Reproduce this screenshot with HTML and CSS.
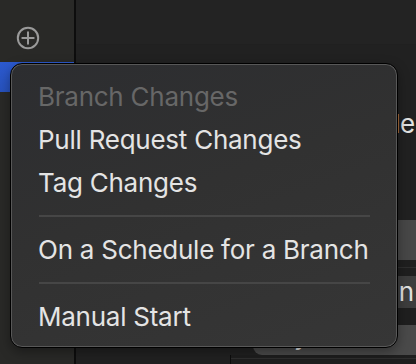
FILE: index.html
```html
<!DOCTYPE html>
<html>
<head>
<meta charset="utf-8">
<link rel="stylesheet" href="styles.css">
</head>
<body>
<div class="app">
  <aside class="sidebar">
    <div class="side-top">
      <svg class="plus" width="24" height="24" viewBox="0 0 24 24">
        <circle cx="12" cy="12" r="10.2" fill="none" stroke="#9a9a9a" stroke-width="2"/>
        <path d="M12 6.3V17.7M6.3 12H17.7" stroke="#9a9a9a" stroke-width="2" stroke-linecap="round"/>
      </svg>
    </div>
    <div class="side-row selected"></div>
  </aside>
  <main class="main">
    <div class="toolbar"></div>
    <div class="form">
      <div class="label-row"><span class="label">Schedule</span></div>
      <div class="btn btn-a"></div>
      <div class="band"></div>
      <div class="btn btn-b"><span class="btn-text">Action</span></div>
      <div class="band2"></div>
      <div class="btn btn-c"><span class="btn-text2">Key</span></div>
      <div class="footer"></div>
    </div>
  </main>
</div>

<div class="menu">
  <div class="item disabled">Branch Changes</div>
  <div class="item">Pull Request Changes</div>
  <div class="item">Tag Changes</div>
  <div class="sep"></div>
  <div class="item">On a Schedule for a Branch</div>
  <div class="sep"></div>
  <div class="item">Manual Start</div>
</div>
</body>
</html>
```

FILE: styles.css
```css
html, body {
  margin: 0;
  padding: 0;
  width: 416px;
  height: 364px;
  overflow: hidden;
  background: #222222;
  font-family: Inter, "Noto Sans", sans-serif;
}

.app {
  display: flex;
  width: 416px;
  height: 364px;
}

.sidebar {
  width: 74px;
  flex: none;
  background: #292927;
  border-right: 2px solid #0d0d0d;
  display: flex;
  flex-direction: column;
}

.side-top {
  height: 62px;
  display: flex;
  justify-content: flex-start;
  padding-left: 16px;
  padding-top: 26px;
  box-sizing: border-box;
}

.side-row.selected {
  height: 30px;
  background: linear-gradient(180deg, #2c5ad0, #2752bd);
}

.main {
  flex: 1;
  display: flex;
  flex-direction: column;
  background: #212121;
}

.toolbar {
  height: 44px;
  flex: none;
  background: #232323;
  box-shadow: inset 40px -1px 0 #232323, inset 0 -1px 0 #3b3b3b;
  border-bottom: 1px solid #202020;
}

.form {
  flex: 1;
  display: flex;
  flex-direction: column;
  padding-top: 63px;
  padding-left: 155px;
}

.label-row {
  height: 32px;
  display: flex;
  justify-content: flex-end;
  padding-right: 1px;
}

.label {
  font-size: 26px;
  line-height: 32px;
  color: #e2e2e2;
  white-space: nowrap;
  letter-spacing: -0.25px;
}

.btn {
  display: flex;
  justify-content: flex-end;
  align-items: center;
}

.btn-a {
  margin-top: 80px;
  height: 40px;
  background: #474747;
}

.band {
  height: 16px;
  background: #1f1f1f;
  box-shadow: inset 0 -8px 0 #1f1f1f, inset 0 -9px 0 #2e2e2e;
}

.btn-b {
  height: 32px;
  background: #3d3d3d;
}

.btn-text {
  font-size: 26px;
  line-height: 32px;
  color: #e0e0e0;
  padding-right: 2px;
  white-space: nowrap;
}

.band2 {
  height: 17px;
  background: #1f1f1f;
}

.btn-c {
  height: 30px;
  margin-left: 22px;
  background: #4a4a4a;
  border-radius: 0 0 0 9px;
  justify-content: flex-start;
  align-items: flex-start;
}

.btn-text2 {
  font-size: 26px;
  line-height: 26px;
  color: #e0e0e0;
  padding-left: 10px;
  margin-top: -2px;
}

.footer {
  flex: 1;
  background: #1e1e1e;
  border-left: 1px solid #0c0c0c;
  margin-left: -1px;
  box-shadow: inset 0 -5px 0 #1e1e1e, inset 0 -6px 0 #2e2e2e;
}

.menu {
  position: absolute;
  left: 10px;
  top: 63px;
  width: 388px;
  height: 285px;
  box-sizing: border-box;
  border: 1px solid #000;
  border-radius: 12px;
  box-shadow: inset 0 0 0 1px #585858, 0 4px 12px rgba(0,0,0,0.35);
  background: linear-gradient(160deg, #2c2d30 0%, #313131 45%, #363636 100%);
  padding: 11px 27px 9px;
  display: flex;
  flex-direction: column;
}

.item {
  height: 43px;
  line-height: 43px;
  font-size: 26px;
  color: #e4e4e4;
  white-space: nowrap;
  letter-spacing: -0.25px;
}

.item.disabled {
  color: #676767;
}

.sep {
  height: 2px;
  margin: 11px 0 11px 1px;
  background: #464646;
}
```
